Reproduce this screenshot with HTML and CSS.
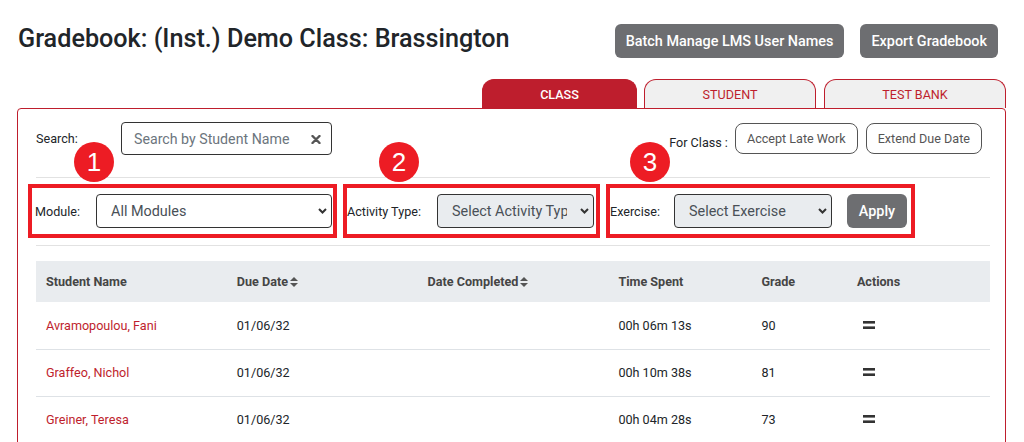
FILE: index.html
```html
<!DOCTYPE html>
<html lang="en">
<head>
    <meta charset="UTF-8">
    <meta name="viewport" content="width=device-width, initial-scale=1.0">
    <title>Gradebook</title>
    <link rel="stylesheet" href="styles.css">
</head>
<body>
    <div class="page">
        <div class="page-header">
            <h1>Gradebook: (Inst.) Demo Class: Brassington</h1>
            <div class="header-actions">
                <button class="btn-dark">Batch Manage LMS User Names</button>
                <button class="btn-dark">Export Gradebook</button>
            </div>
        </div>

        <div class="tabs">
            <div class="tab active">CLASS</div>
            <div class="tab tab-student">STUDENT</div>
            <div class="tab tab-bank">TEST BANK</div>
        </div>

        <div class="panel">
            <div class="search-row">
                <label class="search-label">Search:</label>
                <div class="search-box">
                    <input type="text" placeholder="Search by Student Name">
                    <svg class="clear-icon" width="10" height="9" viewBox="0 0 10 9">
                        <path d="M1.5 1 L8.5 8 M8.5 1 L1.5 8" stroke="#555" stroke-width="2.4" stroke-linecap="round"/>
                    </svg>
                </div>
                <div class="class-actions">
                    <span class="for-class">For Class :</span>
                    <button class="btn-outline">Accept Late Work</button>
                    <button class="btn-outline">Extend Due Date</button>
                </div>
            </div>

            <div class="divider"></div>

            <div class="filter-row">
                <div class="filter-group group-module">
                    <span class="step-badge">1</span>
                    <label>Module:</label>
                    <div class="select-wrap select-module">
                        <select><option>All Modules</option></select>
                        <svg class="chevron" width="9" height="6" viewBox="0 0 9 6">
                            <path d="M1 1 L4.5 4.5 L8 1" fill="none" stroke="#333" stroke-width="2"/>
                        </svg>
                    </div>
                </div>

                <div class="filter-group group-activity">
                    <span class="step-badge">2</span>
                    <label>Activity Type:</label>
                    <div class="select-wrap select-activity disabled">
                        <select><option>Select Activity Type</option></select>
                        <svg class="chevron" width="9" height="6" viewBox="0 0 9 6">
                            <path d="M1 1 L4.5 4.5 L8 1" fill="none" stroke="#333" stroke-width="2"/>
                        </svg>
                    </div>
                </div>

                <div class="filter-group group-exercise">
                    <span class="step-badge">3</span>
                    <label>Exercise:</label>
                    <div class="select-wrap select-exercise disabled">
                        <select><option>Select Exercise</option></select>
                        <svg class="chevron" width="9" height="6" viewBox="0 0 9 6">
                            <path d="M1 1 L4.5 4.5 L8 1" fill="none" stroke="#333" stroke-width="2"/>
                        </svg>
                    </div>
                    <button class="btn-apply">Apply</button>
                </div>
            </div>

            <div class="divider divider-low"></div>

            <table class="grade-table">
                <colgroup>
                    <col class="col-wide"><col class="col-wide"><col class="col-wide">
                    <col class="col-mid"><col class="col-narrow"><col class="col-mid">
                </colgroup>
                <thead>
                    <tr>
                        <th>Student Name</th>
                        <th>Due Date <svg class="sort-icon" width="8" height="10" viewBox="0 0 8 10"><path d="M0 4 L4 0 L8 4 Z M0 6 L4 10 L8 6 Z" fill="#555"/></svg></th>
                        <th>Date Completed <svg class="sort-icon" width="8" height="10" viewBox="0 0 8 10"><path d="M0 4 L4 0 L8 4 Z M0 6 L4 10 L8 6 Z" fill="#555"/></svg></th>
                        <th>Time Spent</th>
                        <th>Grade</th>
                        <th>Actions</th>
                    </tr>
                </thead>
                <tbody>
                    <tr>
                        <td class="student-name">Avramopoulou, Fani</td>
                        <td>01/06/32</td>
                        <td></td>
                        <td>00h 06m 13s</td>
                        <td>90</td>
                        <td><svg class="menu-icon" width="12" height="8" viewBox="0 0 12 8"><rect x="0" y="0" width="12" height="2.6" fill="#333"/><rect x="0" y="5.4" width="12" height="2.6" fill="#333"/></svg></td>
                    </tr>
                    <tr>
                        <td class="student-name">Graffeo, Nichol</td>
                        <td>01/06/32</td>
                        <td></td>
                        <td>00h 10m 38s</td>
                        <td>81</td>
                        <td><svg class="menu-icon" width="12" height="8" viewBox="0 0 12 8"><rect x="0" y="0" width="12" height="2.6" fill="#333"/><rect x="0" y="5.4" width="12" height="2.6" fill="#333"/></svg></td>
                    </tr>
                    <tr>
                        <td class="student-name">Greiner, Teresa</td>
                        <td>01/06/32</td>
                        <td></td>
                        <td>00h 04m 28s</td>
                        <td>73</td>
                        <td><svg class="menu-icon" width="12" height="8" viewBox="0 0 12 8"><rect x="0" y="0" width="12" height="2.6" fill="#333"/><rect x="0" y="5.4" width="12" height="2.6" fill="#333"/></svg></td>
                    </tr>
                </tbody>
            </table>
        </div>
    </div>
</body>
</html>
```

FILE: styles.css
```css
* {
    margin: 0;
    padding: 0;
    box-sizing: border-box;
    font-family: Roboto, 'Liberation Sans', sans-serif;
}

body {
    background: #fff;
    color: #212529;
    overflow: hidden;
}

.page {
    padding: 24px 18px 0 17px;
}

.page-header {
    display: flex;
    align-items: flex-start;
    justify-content: space-between;
    padding: 0 8px 0 1px;
}

h1 {
    font-size: 25.2px;
    font-weight: 500;
    line-height: 30px;
    color: #212529;
}

.header-actions {
    display: flex;
    gap: 16px;
}

button {
    cursor: pointer;
}

.btn-dark {
    height: 34px;
    padding: 0 11px;
    border: none;
    border-radius: 6px;
    background: #6d6e71;
    color: #fff;
    font-size: 14.4px;
    font-weight: 500;
}

/* tabs */
.tabs {
    display: flex;
    justify-content: flex-end;
    gap: 7px;
    margin-top: 21px;
}

.tab {
    height: 29px;
    display: flex;
    align-items: center;
    justify-content: center;
    border: 1px solid #be1e2d;
    border-bottom: none;
    border-radius: 12px 12px 0 0;
    background: #f0f0f0;
    color: #be1e2d;
    font-size: 12.6px;
}

.tab.active {
    width: 155px;
    background: #be1e2d;
    color: #fff;
    font-weight: 500;
}

.tab-student {
    width: 172px;
}

.tab-bank {
    width: 182px;
    margin-left: 1px;
}

.panel {
    border: 1px solid #be1e2d;
    border-radius: 4px 4px 0 0;
    padding: 13px 15px 60px 18px;
}

/* search row */
.search-row {
    display: flex;
    align-items: center;
    height: 33px;
}

.search-label {
    width: 85px;
    font-size: 12.6px;
}

.search-box {
    position: relative;
    width: 211px;
    height: 33px;
}

.search-box input {
    width: 100%;
    height: 100%;
    border: 1px solid #333;
    border-radius: 4px;
    padding: 0 30px 0 12px;
    font-size: 14.2px;
    color: #495057;
    outline: none;
}

.search-box input::placeholder {
    color: #6c757d;
}

.clear-icon {
    position: absolute;
    right: 11px;
    top: 13px;
}

.class-actions {
    margin-left: auto;
    margin-right: 8px;
    display: flex;
    align-items: center;
    gap: 8px;
}

.for-class {
    font-size: 12.6px;
    margin-top: 8px;
    margin-right: -1px;
}

.btn-outline {
    height: 31px;
    padding: 0 11px;
    border: 1px solid #555;
    border-radius: 8px;
    background: #fff;
    color: #555;
    font-size: 12.6px;
}

.divider {
    height: 1px;
    background: #e2e2e2;
    margin-top: 22px;
}

.divider-low {
    margin-top: 7px;
}

/* filters with the numbered callouts */
.filter-row {
    display: flex;
    gap: 6px;
    margin: 6px 0 0 -8px;
}

.filter-group {
    position: relative;
    display: flex;
    align-items: center;
    height: 54px;
    border: 4px solid #ed1c24;
    font-size: 12.6px;
}

.group-module {
    width: 309px;
    padding: 0 1px 0 3px;
}

.group-activity {
    width: 257px;
    padding: 0 2px 0 0;
}

.group-exercise {
    width: 309px;
    padding: 0 4px 0 0;
}

.step-badge {
    position: absolute;
    top: -46px;
    width: 40px;
    height: 40px;
    border-radius: 50%;
    background: #ed1c24;
    color: #fff;
    font-family: 'Liberation Sans', sans-serif;
    font-size: 26px;
    line-height: 40px;
    text-align: center;
}

.group-module .step-badge {
    left: 42px;
}

.group-activity .step-badge {
    left: 32px;
}

.group-exercise .step-badge {
    left: 20px;
}

.select-wrap {
    position: relative;
    margin-left: auto;
}

.select-wrap select {
    width: 100%;
    height: 34px;
    appearance: none;
    border: 1px solid #333;
    border-radius: 4px;
    padding: 0 26px 0 14px;
    background: #fff;
    color: #495057;
    font-size: 14.4px;
    outline: none;
}

.select-wrap.disabled select {
    background: #e9ecef;
}

.select-module {
    width: 236px;
}

.select-activity {
    width: 157px;
}

.select-exercise {
    width: 158px;
}

.chevron {
    position: absolute;
    right: 5px;
    top: 14px;
    pointer-events: none;
}

.btn-apply {
    width: 60px;
    height: 34px;
    margin-left: 15px;
    border: none;
    border-radius: 6px;
    background: #6d6e71;
    color: #fff;
    font-size: 14.4px;
    font-weight: 500;
}

/* table */
.grade-table {
    width: 100%;
    margin-top: 15px;
    border-collapse: collapse;
    font-size: 12.6px;
}

.col-wide {
    width: 20%;
}

.col-mid {
    width: 15%;
}

.col-narrow {
    width: 10%;
}

.grade-table th {
    height: 41px;
    padding: 0 10px;
    background: #e9ecef;
    color: #454545;
    font-weight: 700;
    text-align: left;
}

.grade-table td {
    height: 47px;
    padding: 0 10px;
    border-bottom: 1px solid #dee2e6;
    color: #212529;
}

.grade-table td.student-name {
    color: #be1e2d;
}

.sort-icon {
    margin-left: -1px;
    vertical-align: -1px;
}

.menu-icon {
    margin-left: 6px;
    vertical-align: 1px;
}
```
